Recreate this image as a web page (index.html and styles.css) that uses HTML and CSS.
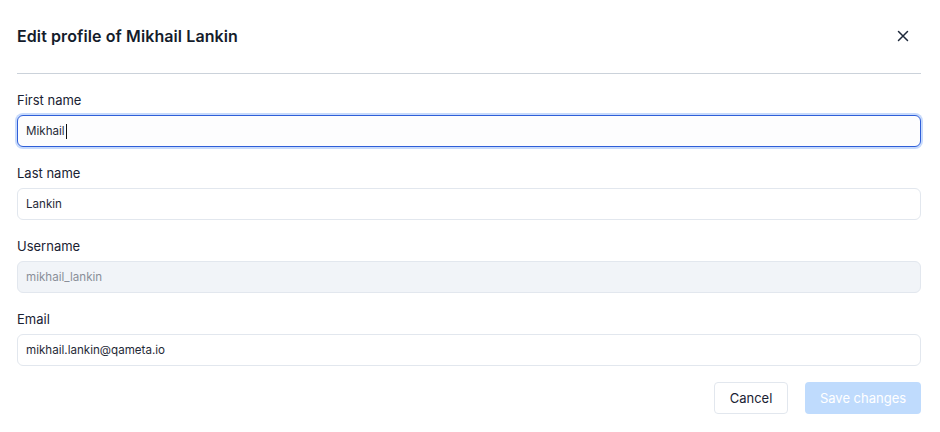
FILE: index.html
```html
<!DOCTYPE html>
<html lang="en">
<head>
<meta charset="utf-8">
<title>Edit profile</title>
<link rel="stylesheet" href="styles.css">
</head>
<body>
<div class="dialog">
  <header class="header">
    <h1 class="title">Edit profile of Mikhail Lankin</h1>
    <button class="close" aria-label="Close">
      <svg width="12" height="12" viewBox="0 0 12 12"><path d="M1.5 1.5L10.5 10.5M10.5 1.5L1.5 10.5" stroke="#1e293b" stroke-width="1.5" stroke-linecap="round"/></svg>
    </button>
  </header>
  <form class="form">
    <div class="field">
      <label class="label">First name</label>
      <div class="input focused">Mikhail<span class="caret"></span></div>
    </div>
    <div class="field">
      <label class="label">Last name</label>
      <div class="input">Lankin</div>
    </div>
    <div class="field">
      <label class="label">Username</label>
      <div class="input disabled">mikhail_lankin</div>
    </div>
    <div class="field">
      <label class="label">Email</label>
      <div class="input">mikhail.lankin@qameta.io</div>
    </div>
    <div class="actions">
      <button type="button" class="btn btn-cancel">Cancel</button>
      <button type="button" class="btn btn-save">Save changes</button>
    </div>
  </form>
</div>
</body>
</html>
```
FILE: styles.css
```css
* { box-sizing: border-box; }
html, body { margin: 0; padding: 0; background: #ffffff; }
body {
  font-family: Inter, "Noto Sans", "Liberation Sans", sans-serif;
  color: #1a2233;
}
.dialog {
  width: 940px;
  padding: 0 19px 0 17px;
}
.header {
  height: 74px;
  display: flex;
  align-items: center;
  justify-content: space-between;
  border-bottom: 1px solid #cbd2da;
  padding-bottom: 1px;
}
.title {
  margin: 0;
  font-size: 16px;
  font-weight: 600;
  color: #141c2b;
  letter-spacing: 0.1px;
}
.close {
  width: 24px;
  height: 24px;
  margin-right: 6px;
  border: 0;
  background: transparent;
  padding: 0;
  display: flex;
  align-items: center;
  justify-content: center;
}
.form {
  padding-top: 17px;
  display: flex;
  flex-direction: column;
  gap: 17px;
}
.field {
  display: flex;
  flex-direction: column;
  gap: 6px;
}
.label {
  font-size: 13px;
  line-height: 18px;
  color: #1a2233;
}
.input {
  height: 32px;
  border: 1px solid #e2e7ee;
  border-radius: 6px;
  padding: 0 8px;
  display: flex;
  align-items: center;
  font-size: 11.6px;
  color: #1f2937;
  background: #fff;
}
.input.focused {
  border-color: #2f5fd8;
  box-shadow: 0 0 0 2px #c7dafc;
  background: #fdfdfe;
}
.caret {
  display: inline-block;
  width: 1px;
  height: 15px;
  background: #111;
  margin-left: 1px;
}
.input.disabled {
  background: #f1f4f8;
  color: #8a8f98;
}
.actions {
  display: flex;
  justify-content: flex-end;
  gap: 17px;
  margin-top: -1px;
}
.btn {
  height: 32px;
  border-radius: 4px;
  font-family: inherit;
  font-size: 13px;
  padding: 0;
  white-space: nowrap;
}
.btn-cancel {
  width: 74px;
  background: #fff;
  border: 1px solid #e2e7ee;
  color: #1a2233;
}
.btn-save {
  width: 116px;
  background: #bfdbfd;
  border: 0;
  color: #ffffff;
}
```
